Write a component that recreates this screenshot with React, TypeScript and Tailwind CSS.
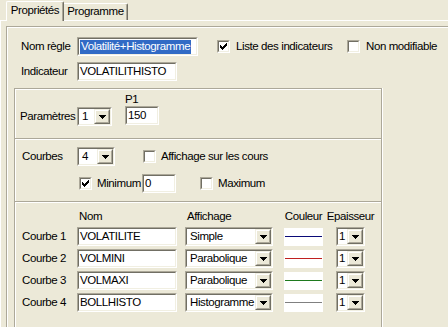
import React from "react";

const sunkenOuter =
  "border border-t-[#ACA899] border-l-[#ACA899] border-r-white border-b-white";
const sunkenInner =
  "border border-t-[#716F64] border-l-[#716F64] border-r-[#F1EFE2] border-b-[#F1EFE2]";
const group =
  "border-t border-l border-r border-t-[#ACA899] border-l-[#ACA899] border-r-[#ACA899] shadow-[inset_1px_1px_0_#fff,1px_0_0_#fff]";

const Field = ({
  className,
  children,
}: {
  className: string;
  children?: React.ReactNode;
}) => (
  <div className={`${sunkenOuter} ${className} flex shrink-0`}>
    <div
      className={`${sunkenInner} flex-1 min-w-0 bg-white flex items-center overflow-hidden whitespace-nowrap`}
    >
      {children}
    </div>
  </div>
);

const DropButton = () => (
  <div className="h-full w-[16px] shrink-0 flex border border-t-[#F1EFE2] border-l-[#F1EFE2] border-r-[#716F64] border-b-[#716F64]">
    <div className="flex-1 flex items-center justify-center bg-[#ECE9D8] border border-t-white border-l-white border-r-[#ACA899] border-b-[#ACA899]">
      <svg width="7" height="4" viewBox="0 0 7 4" shapeRendering="crispEdges">
        <path d="M0 0h7v1h-1v1h-1v1h-1v1h-1v-1h-1v-1h-1v-1h-1z" fill="#000" />
      </svg>
    </div>
  </div>
);

const Combo = ({
  className,
  value,
  pad = "pl-[3px]",
}: {
  className: string;
  value: string;
  pad?: string;
}) => (
  <Field className={className}>
    <span className={`flex-1 min-w-0 ${pad}`}>{value}</span>
    <DropButton />
  </Field>
);

const Check = ({ checked }: { checked?: boolean }) => (
  <div className={`${sunkenOuter} w-[13px] h-[13px] flex shrink-0`}>
    <div className={`${sunkenInner} flex-1 bg-white flex items-center justify-center`}>
      {checked && (
        <svg width="7" height="7" viewBox="0 0 7 7" shapeRendering="crispEdges">
          <path
            d="M0 2h1v3H0z M1 3h1v3H1z M2 4h1v3H2z M3 3h1v3H3z M4 2h1v3H4z M5 1h1v3H5z M6 0h1v3H6z"
            fill="#000"
          />
        </svg>
      )}
    </div>
  </div>
);

const curves = [
  { label: "Courbe 1", name: "VOLATILITE", mode: "Simple", color: "bg-[#0A0A78]" },
  { label: "Courbe 2", name: "VOLMINI", mode: "Parabolique", color: "bg-[#C02020]" },
  { label: "Courbe 3", name: "VOLMAXI", mode: "Parabolique", color: "bg-[#1E7A1E]" },
  { label: "Courbe 4", name: "BOLLHISTO", mode: "Histogramme", color: "bg-[#808080]" },
];

export default function App() {
  return (
    <div className="w-[448px] h-[327px] overflow-hidden bg-[#ECE9D8] flex flex-col text-[11.5px] leading-none tracking-[-0.4px] text-black font-['Liberation_Sans',Arial,sans-serif] select-none">
      {/* tabs */}
      <div className="h-[20px] shrink-0 flex items-end pl-[6px] relative z-10">
        <div className="h-[20px] w-[58px] -mb-px flex items-center justify-center pb-[1px] bg-[#ECE9D8] border-l border-t border-r border-l-white border-t-white border-r-[#716F64] rounded-t-[2px] shadow-[inset_-1px_0_0_#ACA899]">
          Propriétés
        </div>
        <div className="h-[17px] w-[64px] flex items-center justify-center border-t border-r border-t-white border-r-[#716F64] rounded-tr-[2px] shadow-[inset_-1px_0_0_#ACA899]">
          Programme
        </div>
      </div>

      {/* tab sheet */}
      <div className="flex-1 min-h-0 border-t border-l border-t-white border-l-white pl-[5px] pt-[5px]">
        <div className="h-full border-t border-l border-t-[#ACA899] border-l-[#ACA899] shadow-[inset_1px_1px_0_#fff] flex flex-col">
          {/* rule */}
          <div className="pt-[10px] pl-[14px] flex flex-col gap-[6px]">
            <div className="flex items-center h-[19px]">
              <span className="w-[56px]">Nom règle</span>
              <Field className="w-[121px] h-[19px]">
                <span className="ml-[1px] h-[14px] px-[1px] flex items-center bg-[#316AC5] text-white">
                  Volatilité+Histogramme
                </span>
              </Field>
              <div className="ml-[19px] w-[130px] flex items-center">
                <Check checked />
                <span className="ml-[6px] whitespace-nowrap">Liste des indicateurs</span>
              </div>
              <Check />
              <span className="ml-[6px] whitespace-nowrap">Non modifiable</span>
            </div>
            <div className="flex items-center h-[19px]">
              <span className="w-[56px]">Indicateur</span>
              <Field className="w-[100px] h-[19px]">
                <span className="pl-[1px]">VOLATILITHISTO</span>
              </Field>
            </div>
          </div>

          <div className="mt-[7px] ml-[7px] w-[368px] flex-1 flex flex-col">
            {/* parameters */}
            <div className={`${group} h-[50px] shrink-0 flex flex-col`}>
              <div className="pl-[110px] pt-[5px] h-[16px]">P1</div>
              <div className="flex items-start">
                <span className="pl-[5px] w-[62px] h-[19px] mt-[2px] flex items-center">Paramètres</span>
                <Combo className="w-[35px] h-[19px] mt-[2px]" value="1" />
                <Field className="ml-[13px] w-[34px] h-[19px] mt-px">
                  <span className="pl-[1px]">150</span>
                </Field>
              </div>
            </div>

            {/* curves count */}
            <div className={`${group} h-[63px] shrink-0 flex flex-col pt-[8px] gap-[8px]`}>
              <div className="flex items-center h-[19px]">
                <span className="pl-[7px] w-[62px]">Courbes</span>
                <Combo className="w-[38px] h-[19px]" value="4" />
                <div className="ml-[28px] flex items-center">
                  <Check />
                  <span className="ml-[5px] whitespace-nowrap">Affichage sur les cours</span>
                </div>
              </div>
              <div className="flex items-center h-[19px] pl-[64px]">
                <Check checked />
                <span className="ml-[5px] w-[45px]">Minimum</span>
                <Field className="w-[34px] h-[19px]">
                  <span className="pl-[1px]">0</span>
                </Field>
                <div className="ml-[24px] flex items-center">
                  <Check />
                  <span className="ml-[5px]">Maximum</span>
                </div>
              </div>
            </div>

            {/* curves */}
            <div className={`${group} flex-1 flex flex-col pt-[9px]`}>
              <div className="flex items-center h-[12px]">
                <span className="w-[62px]" />
                <span className="w-[100px] pl-[2px]">Nom</span>
                <span className="ml-[8px] w-[88px] pl-[2px]">Affichage</span>
                <span className="ml-[11px] w-[39px] flex justify-center whitespace-nowrap">Couleur</span>
                <span className="ml-[13px] w-[29px] flex justify-center whitespace-nowrap">Epaisseur</span>
              </div>
              <div className="mt-[4px] flex flex-col gap-[3px]">
                {curves.map((c) => (
                  <div key={c.label} className="flex items-center h-[19px]">
                    <span className="pl-[7px] w-[62px] whitespace-nowrap">{c.label}</span>
                    <Field className="w-[100px] h-[19px]">
                      <span className="pl-[1px]">{c.name}</span>
                    </Field>
                    <Combo className="ml-[8px] w-[88px] h-[19px]" value={c.mode} />
                    <div className="ml-[11px] w-[39px] h-[18px] bg-white flex items-center px-px">
                      <div className={`h-px w-full ${c.color}`} />
                    </div>
                    <Combo className="ml-[13px] w-[29px] h-[19px]" value="1" pad="pl-[1px]" />
                  </div>
                ))}
              </div>
            </div>
          </div>
        </div>
      </div>
    </div>
  );
}
